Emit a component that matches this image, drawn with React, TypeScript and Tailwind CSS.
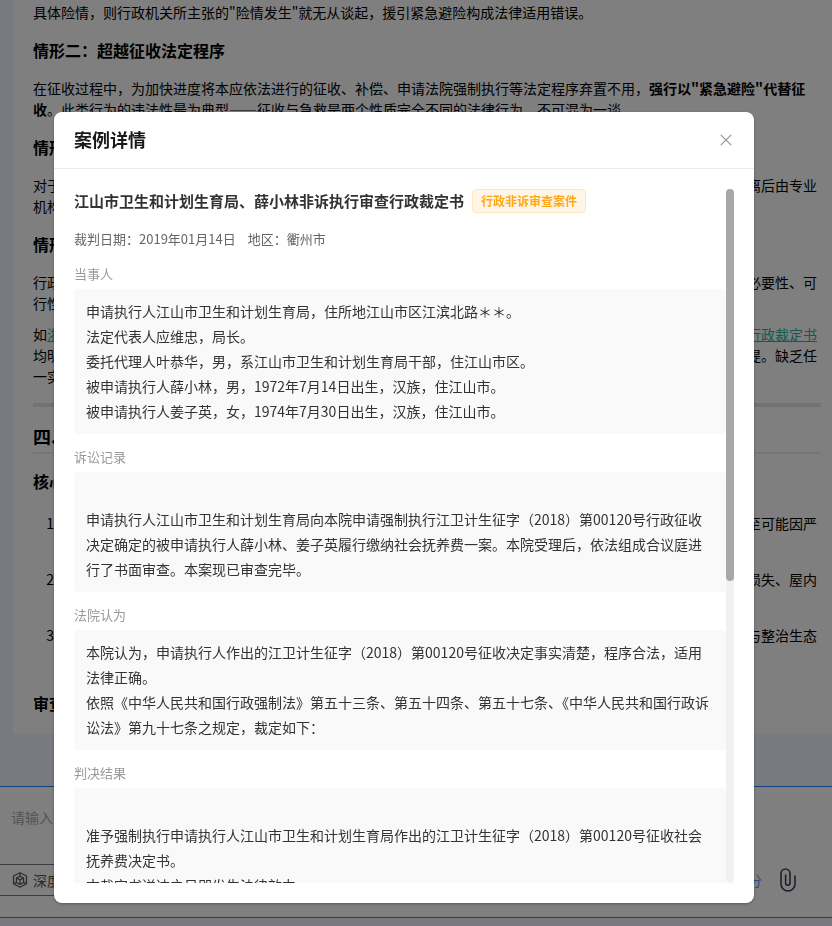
import React, { useState } from 'react';

interface CaseSection {
  label: string;
  content: string;
}

const sections: CaseSection[] = [
  {
    label: '当事人',
    content:
      '申请执行人江山市卫生和计划生育局，住所地江山市区江滨北路＊＊。\n法定代表人应维忠，局长。\n委托代理人叶恭华，男，系江山市卫生和计划生育局干部，住江山市区。\n被申请执行人薛小林，男，1972年7月14日出生，汉族，住江山市。\n被申请执行人姜子英，女，1974年7月30日出生，汉族，住江山市。',
  },
  {
    label: '诉讼记录',
    content:
      '\n申请执行人江山市卫生和计划生育局向本院申请强制执行江卫计生征字（2018）第00120号行政征收决定确定的被申请执行人薛小林、姜子英履行缴纳社会抚养费一案。本院受理后，依法组成合议庭进行了书面审查。本案现已审查完毕。',
  },
  {
    label: '法院认为',
    content:
      '本院认为，申请执行人作出的江卫计生征字（2018）第00120号征收决定事实清楚，程序合法，适用法律正确。\n依照《中华人民共和国行政强制法》第五十三条、第五十四条、第五十七条、《中华人民共和国行政诉讼法》第九十七条之规定，裁定如下：',
  },
  {
    label: '判决结果',
    content:
      '\n准予强制执行申请执行人江山市卫生和计划生育局作出的江卫计生征字（2018）第00120号征收社会抚养费决定书。\n本裁定书送达之日即发生法律效力。',
  },
];

const CubeIcon = () => (
  <svg viewBox="0 0 16 16" className="size-4 shrink-0" fill="none" stroke="currentColor" strokeWidth="1.2" strokeLinejoin="round" aria-hidden="true">
    <path d="M8 .8 14.500 4v7.800L8 15.200 1.500 11.800V4z" />
    <path d="M4.400 6 8 4.200 11.600 6v4.400L8 12.400l-3.600-2z" />
    <path d="M4.400 6 8 7.900 11.600 6M8 7.900v4.500M8 .8v3.400M1.500 11.800l2.900-1.400M14.500 11.800l-2.900-1.400" />
  </svg>
);

const ClipIcon = () => (
  <svg viewBox="0 0 16 24" className="h-6 w-4" fill="none" stroke="currentColor" strokeWidth="1.6" strokeLinecap="round" aria-hidden="true">
    <path d="M15 8v8a7 7 0 0 1-14 0V5.500a4.500 4.500 0 0 1 9 0V15a2.200 2.200 0 0 1-4.400 0V7" />
  </svg>
);

const CloseIcon = () => (
  <svg viewBox="0 0 12 12" className="size-3" fill="none" stroke="currentColor" strokeWidth="1.2" aria-hidden="true">
    <path d="M.8.8l10.400 10.400M11.200.8.8 11.200" />
  </svg>
);

const Heading = ({ children }: { children: React.ReactNode }) => (
  <h3 className="my-[15px] text-base leading-[25px] font-bold">{children}</h3>
);

const Article = () => (
  <article className="ml-[13px] bg-white pt-[2px] pr-[11px] pb-[18px] pl-5 text-sm leading-[21px] text-black">
    <p>具体险情，则行政机关所主张的"险情发生"就无从谈起，援引紧急避险构成法律适用错误。</p>
    <Heading>情形二：超越征收法定程序</Heading>
    <p>
      在征收过程中，为加快进度将本应依法进行的征收、补偿、申请法院强制执行等法定程序弃置不用，
      <strong>强行以"紧急避险"代替征收</strong>。此类行为的违法性最为典型——征收与急救是两个性质完全不同的法律行为，不可混为一谈。
    </p>
    <Heading>情形三：未经鉴定径行拆除</Heading>
    <p>
      对于房屋本身存在安全隐患但尚未达到即时倒塌程度的情形，行政机关应当优先采取警示、疏散等措施，先将人员隔离后由专业机构鉴定并依法处置，不得径行拆除。
    </p>
    <Heading>情形四：手段明显超出必要限度</Heading>
    <p>
      行政强制措施应当遵循比例原则，即便存在紧急情况，也应选择对当事人损害最小的方式实施，并就其手段说明相应必要性、可行性承担举证责任。
    </p>
    <p className="mt-[10px]">
      如<a href="#case-1" className="text-[#2bb596] underline">浙江省衢州市中级人民法院行政判决书</a>、
      <a href="#case-2" className="text-[#2bb596] underline">浙江省江山市人民法院行政判决书</a>以及
      <a href="#case-3" className="text-[#2bb596] underline">江山市卫生局与薛小林非诉执行案行政裁定书</a>
      均明确将现实险情的客观存在作为行政机关实施紧急避险的首要条件，并以程序合法、手段适当和损害可控为适用前提。缺乏任一实质要件的，均不能认定为紧急避险。
    </p>
    <hr className="mt-4 mb-[15px] h-1 border-0 bg-[#e1e4e8]" />
    <h2 className="border-b-2 border-[#eaecef] pb-[2px] text-lg leading-7 font-bold">四、结论与建议</h2>
    <Heading>核心建议</Heading>
    <ol className="list-decimal space-y-[14px] pt-1 pl-7">
      <li>
        对确有危险的房屋，应当及时委托专业机构开展鉴定并固定现场证据，否则将在诉讼中难以证明险情的存在，甚至可能因严重违反程序而被确认违法。
      </li>
      <li>
        行政机关在实施拆除行为之前，应当依法制作详细的物品清单并予以公证，以便于在赔偿程序中核实房屋自身的损失、屋内物品损失的具体范围。
      </li>
      <li>
        应当严格区分紧急避险与征收补偿、违法建筑查处等不同的法律制度，避免以抢险救灾的名义实施房屋征收拆除与整治生态环境等活动。
      </li>
    </ol>
    <h3 className="mt-6 text-base leading-[25px] font-bold">审查要点</h3>
  </article>
);

const Composer = () => (
  <form className="mt-[52px] flex flex-col border-y border-[#2080ff] bg-white">
    <textarea
      aria-label="输入问题"
      placeholder="请输入您的问题"
      className="block h-[77px] w-full resize-none px-[11px] pt-5 text-sm leading-[21px] outline-none placeholder:text-[#a8a8a8]"
    />
    <div className="flex items-center justify-between pr-9 pb-[21px]">
      <button type="button" className="flex h-8 items-center gap-[5px] border-y border-[#777] px-3 text-sm text-[#555]">
        <CubeIcon />
        深度思考
      </button>
      <div className="flex items-center gap-[18px]">
        <span className="text-sm text-[#6a95f8]">智能拆分</span>
        <button type="button" aria-label="上传附件" className="text-[#3a4250]">
          <ClipIcon />
        </button>
      </div>
    </div>
  </form>
);

const THUMB_RATIO = 0.565;

const CaseModal = () => {
  const [progress, setProgress] = useState(0);

  const handleScroll = (e: React.UIEvent<HTMLDivElement>) => {
    const { scrollTop, scrollHeight, clientHeight } = e.currentTarget;
    setProgress(scrollTop / Math.max(1, scrollHeight - clientHeight));
  };

  return (
    <div className="fixed inset-0 flex items-start justify-center bg-black/50 pt-28 pr-6 pb-[23px]">
      <div
        role="dialog"
        aria-modal="true"
        aria-labelledby="case-modal-title"
        className="flex h-full w-full max-w-[700px] flex-col rounded-lg bg-white shadow-[0_1px_3px_rgba(0,0,0,0.3)]"
      >
        <header className="flex h-[57px] shrink-0 items-center justify-between border-b border-[#ebebeb] px-5">
          <h2 id="case-modal-title" className="pb-[2px] text-lg leading-7 font-bold text-[#1a1a1a]">案例详情</h2>
          <button type="button" aria-label="关闭" className="p-[2px] text-[#909399]">
            <CloseIcon />
          </button>
        </header>
        <div className="flex min-h-0 flex-1 p-5">
          <div onScroll={handleScroll} className="min-w-0 flex-1 overflow-y-auto [scrollbar-width:none]">
            <div className="flex items-center gap-2">
              <h3 className="text-[15px] leading-6 font-bold text-[#333]">江山市卫生和计划生育局、薛小林非诉执行审查行政裁定书</h3>
              <span className="h-6 shrink-0 rounded border border-[#ffe7ba] bg-[#fff5e6] px-2 text-xs leading-[22px] font-bold text-[#ffa91a]">
                行政非诉审查案件
              </span>
            </div>
            <div className="mt-[14px] flex gap-3 text-[13px] leading-6 text-[#666]">
              <span>裁判日期：2019年01月14日</span>
              <span>地区：衢州市</span>
            </div>
            {sections.map(section => (
              <section key={section.label} className="mt-3">
                <h4 className="mb-1 text-[13px] leading-[22px] text-[#999]">{section.label}</h4>
                <div className="rounded bg-[#f9f9f9] px-3 py-[10px] text-sm leading-[25px] whitespace-pre-wrap text-[#333]">
                  {section.content}
                </div>
              </section>
            ))}
          </div>
          <div className="flex w-2 shrink-0 flex-col rounded bg-[#f1f1f1]" aria-hidden="true">
            <div style={{ height: `${progress * (1 - THUMB_RATIO) * 100}%` }} />
            <div className="rounded bg-[#a8a8a8]" style={{ height: `${THUMB_RATIO * 100}%` }} />
          </div>
        </div>
      </div>
    </div>
  );
};

export default function App() {
  return (
    <div lang="zh-CN" className="h-screen overflow-hidden bg-[#f3f5ff] font-['Noto_Sans_CJK_SC',sans-serif]">
      <Article />
      <Composer />
      <CaseModal />
    </div>
  );
}
